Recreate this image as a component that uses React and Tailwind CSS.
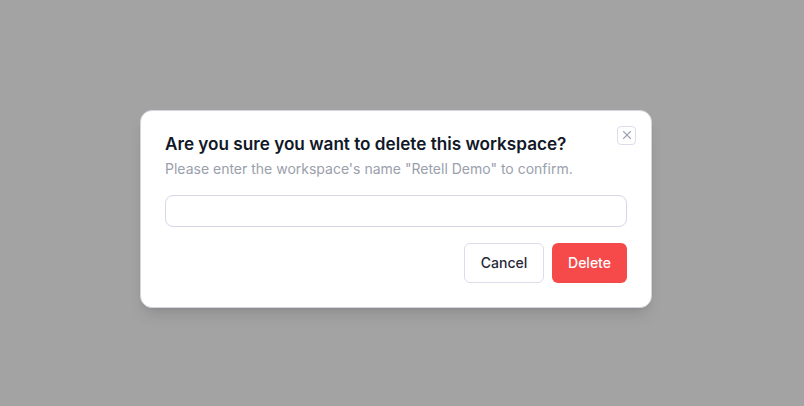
export default function App() {
  return (
    <div
      className="w-[804px] h-[406px] bg-[#a3a3a3] flex items-center justify-center pr-[12px] pt-[11px]"
      style={{ fontFamily: "Inter, 'Noto Sans', sans-serif" }}
    >
      <div className="relative w-[512px] bg-white rounded-xl border border-[#d4d4dc] shadow-lg px-[24px] pt-[21px] pb-[24px]">
        <button className="absolute top-[15px] right-[15px] w-[19px] h-[19px] rounded border border-[#dedbed] flex items-center justify-center text-[#9ca3af]">
          <svg width="12" height="12" viewBox="0 0 24 24" fill="none" stroke="currentColor" strokeWidth="2.2" strokeLinecap="round">
            <line x1="5" y1="5" x2="19" y2="19" />
            <line x1="19" y1="5" x2="5" y2="19" />
          </svg>
        </button>
        <p className="text-[17.15px] leading-[24px] font-semibold text-[#111827]">
          Are you sure you want to delete this workspace?
        </p>
        <p className="text-[14px] leading-[20px] text-[#9aa0ac] mt-[3px]">
          Please enter the workspace's name "Retell Demo" to confirm.
        </p>
        <input className="mt-[16px] w-full h-[32px] rounded-lg border border-[#d8d5e6] outline-none px-3 text-sm" />
        <div className="flex justify-end gap-2 mt-[16px]">
          <button className="w-[80px] h-[40px] rounded-md border border-[#dedbed] bg-white text-[14px] font-medium text-[#1f2937]">
            Cancel
          </button>
          <button className="w-[75px] h-[40px] rounded-md bg-[#f64a4a] text-[14px] font-medium text-white">
            Delete
          </button>
        </div>
      </div>
    </div>
  )
}
